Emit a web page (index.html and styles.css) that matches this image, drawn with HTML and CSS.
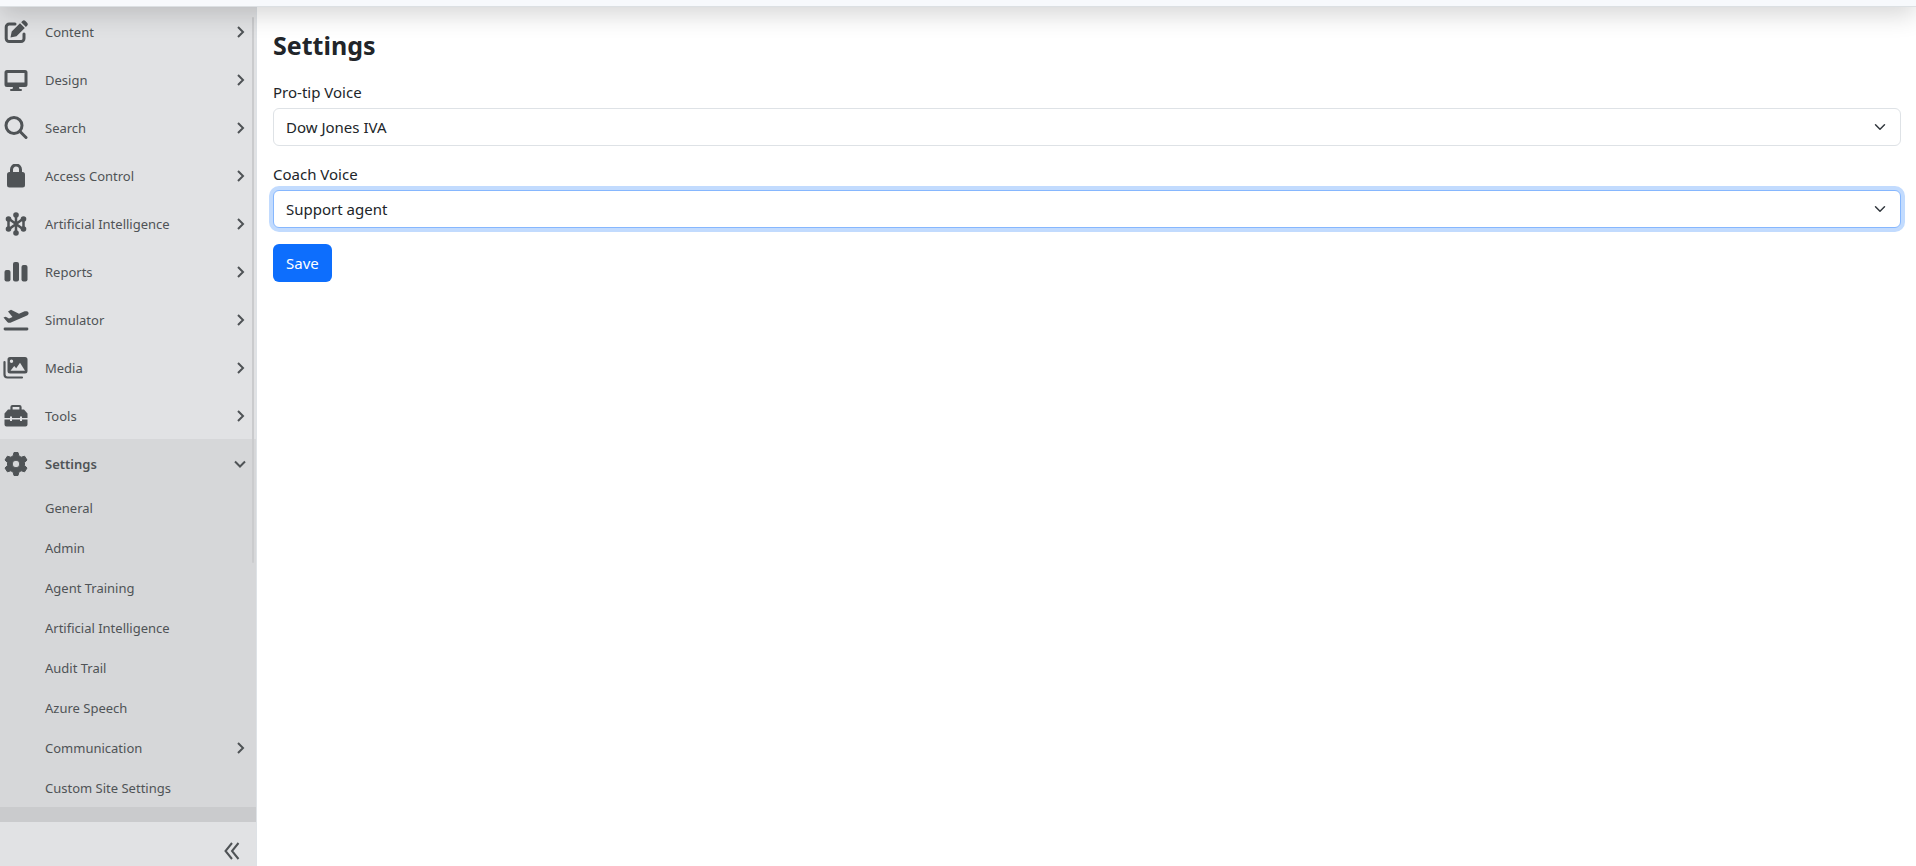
FILE: index.html
```html
<!DOCTYPE html>
<html lang="en">
<head>
<meta charset="utf-8">
<title>Settings</title>
<link rel="stylesheet" href="styles.css">
</head>
<body>
<svg class="sprite" aria-hidden="true">
  <symbol id="chevron" viewBox="0 0 16 16"><path d="M6 3l5 5-5 5" fill="none" stroke="currentColor" stroke-width="2"/></symbol>
  <symbol id="chevron-down" viewBox="0 0 16 16"><path d="M3 5.500l5 5 5-5" fill="none" stroke="currentColor" stroke-width="2"/></symbol>
</svg>
<header class="topbar"></header>
<div class="layout">
  <aside class="sidebar">
    <nav class="menu" aria-label="Main">
      <a class="item" href="#"><svg class="icon" viewBox="0 0 24 24"><path d="M11 4H5.500A3 3 0 0 0 2.200 7v11.500a3 3 0 0 0 3 3H17a3 3 0 0 0 3-3v-4.500" fill="none" stroke="currentColor" stroke-width="3" stroke-linecap="round"/><path d="M6.500 17.500l1.200-6 8.300-8.300 4.800 4.800-8.300 8.300zM17.200 2.200l1.200-1.200a2.200 2.200 0 0 1 3 0l1.700 1.700a2.200 2.200 0 0 1 0 3L21.900 6.900z"/></svg><span class="label">Content</span><svg class="arrow"><use href="#chevron"/></svg></a>
      <a class="item" href="#"><svg class="icon" viewBox="0 0 24 24"><path fill-rule="evenodd" d="M3 2h18a2.500 2.500 0 0 1 2.500 2.500v12A2.500 2.500 0 0 1 21 19h-6l.5 2H17a1 1 0 0 1 0 2H7a1 1 0 0 1 0-2h1.500l.5-2H3a2.500 2.500 0 0 1-2.500-2.500v-12A2.500 2.500 0 0 1 3 2zm.5 3v9.500h17V5z"/></svg><span class="label">Design</span><svg class="arrow"><use href="#chevron"/></svg></a>
      <a class="item" href="#"><svg class="icon" viewBox="0 0 24 24"><circle cx="10" cy="9.500" r="8" fill="none" stroke="currentColor" stroke-width="3"/><path d="M16 15.500l6 6" fill="none" stroke="currentColor" stroke-width="3" stroke-linecap="round"/></svg><span class="label">Search</span><svg class="arrow"><use href="#chevron"/></svg></a>
      <a class="item" href="#"><svg class="icon" viewBox="0 0 24 24"><path d="M7.500 9.500V5.500a4.500 4.500 0 0 1 9 0V9.500" fill="none" stroke="currentColor" stroke-width="3"/><rect x="3" y="8" width="18" height="15.500" rx="2.500"/></svg><span class="label">Access Control</span><svg class="arrow"><use href="#chevron"/></svg></a>
      <a class="item" href="#"><svg class="icon" viewBox="0 0 24 24"><path d="M12 3v18M4.500 6.500v11M19.500 6.500v11M4.500 6.500l15 11M4.500 17.500l15-11" fill="none" stroke="currentColor" stroke-width="2.500"/><circle cx="12" cy="3" r="2.800"/><circle cx="12" cy="21" r="2.800"/><circle cx="4.500" cy="7" r="2.800"/><circle cx="4.500" cy="17" r="2.800"/><circle cx="19.500" cy="7" r="2.800"/><circle cx="19.500" cy="17" r="2.800"/></svg><span class="label">Artificial Intelligence</span><svg class="arrow"><use href="#chevron"/></svg></a>
      <a class="item" href="#"><svg class="icon" viewBox="0 0 24 24"><rect x="0.500" y="10" width="6" height="11.500" rx="2"/><rect x="9" y="2" width="6" height="19.500" rx="2"/><rect x="17.500" y="5" width="6" height="16.500" rx="2"/></svg><span class="label">Reports</span><svg class="arrow"><use href="#chevron"/></svg></a>
      <a class="item" href="#"><svg class="icon wide" viewBox="0 0 26 24"><path d="M2 21h22" stroke="currentColor" stroke-width="2.800" stroke-linecap="round"/><path d="M.5 9.500l2.200-.8 3.300 1.800 3.500-1.500L5 3.500 8 1.800l8 4 4.500-2c2-.8 4.500-.6 5 .9.400 1.300-.5 2.300-2 3L8.500 14.300c-1.500.7-3 .9-4.200-.3z"/></svg><span class="label">Simulator</span><svg class="arrow"><use href="#chevron"/></svg></a>
      <a class="item" href="#"><svg class="icon wide" viewBox="0 0 26 24"><path d="M1.500 6v12.500a3 3 0 0 0 3 3H19" fill="none" stroke="currentColor" stroke-width="2.200" stroke-linecap="round"/><path fill-rule="evenodd" d="M7 1h15a2.500 2.500 0 0 1 2.500 2.500v11.500A2.500 2.500 0 0 1 22 17.500H7A2.500 2.500 0 0 1 4.500 15V3.500A2.500 2.500 0 0 1 7 1zM8.500 3.500a1.700 1.700 0 1 0 0 3.400 1.700 1.700 0 0 0 0-3.400zM7.500 14.800h14.500l-5-8-3.800 5.500-2-2.300z"/></svg><span class="label">Media</span><svg class="arrow"><use href="#chevron"/></svg></a>
      <a class="item" href="#"><svg class="icon" viewBox="0 0 24 24"><path d="M7.500 6V3a1 1 0 0 1 1-1h7a1 1 0 0 1 1 1V6" fill="none" stroke="currentColor" stroke-width="2.200"/><path d="M4 5.500h16l3.500 4V14H18v-1.500h-2V14H8v-1.500H6V14H.5V9.500zM.5 15.500H6V17h2v-1.500h8V17h2v-1.500h5.500v5a2 2 0 0 1-2 2h-19a2 2 0 0 1-2-2z"/></svg><span class="label">Tools</span><svg class="arrow"><use href="#chevron"/></svg></a>
      <div class="group">
        <a class="item current" href="#"><svg class="icon" viewBox="0 0 24 24"><path fill-rule="evenodd" d="M10 .5h4l.9 3.400 2.300 1.300 3.400-1 2.400 3.800L20.500 10.600v2.800L23 16l-2.400 3.800-3.400-1-2.300 1.300-.9 3.400h-4l-.9-3.400-2.300-1.300-3.400 1L1 16l2.500-2.600v-2.800L1 8l2.400-3.800 3.400 1 2.300-1.300zM12 8.200a3.800 3.800 0 1 0 0 7.600 3.800 3.800 0 0 0 0-7.600z" stroke="currentColor" stroke-linejoin="round"/></svg><span class="label">Settings</span><svg class="arrow"><use href="#chevron-down"/></svg></a>
        <a class="item sub" href="#"><span class="label">General</span></a>
        <a class="item sub" href="#"><span class="label">Admin</span></a>
        <a class="item sub" href="#"><span class="label">Agent Training</span></a>
        <a class="item sub" href="#"><span class="label">Artificial Intelligence</span></a>
        <a class="item sub" href="#"><span class="label">Audit Trail</span></a>
        <a class="item sub" href="#"><span class="label">Azure Speech</span></a>
        <a class="item sub" href="#"><span class="label">Communication</span><svg class="arrow"><use href="#chevron"/></svg></a>
        <a class="item sub" href="#"><span class="label">Custom Site Settings</span></a>
        <div class="more"></div>
      </div>
      <div class="scrollbar"></div>
    </nav>
    <div class="foot">
      <button class="collapse" type="button" aria-label="Collapse menu"><svg class="double" viewBox="0 0 18 18"><path d="M9 1L2.500 9 9 17M15.500 1L9 9l6.500 8" fill="none" stroke="currentColor" stroke-width="2"/></svg></button>
    </div>
  </aside>
  <main class="content">
    <h1 class="title">Settings</h1>
    <form class="form">
      <div class="field">
        <label for="tip">Pro-tip Voice</label>
        <select class="select" id="tip"><option>Dow Jones IVA</option></select>
      </div>
      <div class="field">
        <label for="coach">Coach Voice</label>
        <select class="select focused" id="coach"><option>Support agent</option></select>
      </div>
      <button class="save" type="button">Save</button>
    </form>
  </main>
</div>
</body>
</html>
```
FILE: styles.css
```css
* { box-sizing: border-box; }
body {
  margin: 0;
  height: 100vh;
  display: flex;
  flex-direction: column;
  overflow: hidden;
  background: #fff;
  color: #212529;
  font-family: "Segoe UI", "Noto Sans", "Open Sans", sans-serif;
  font-size: 15px;
  line-height: 24px;
}
.sprite { display: none; }
/* Header is scrolled mostly out of view; its lower edge and shadow remain */
.topbar {
  flex: none;
  height: 47px;
  margin-top: -40px;
  background: #f7f9fc;
  border-bottom: 1px solid #dce0e3;
  box-shadow: 0 8px 24px rgba(0, 0, 0, 0.16);
  position: relative;
  z-index: 1;
}
.layout { flex: 1; min-height: 0; display: flex; }
.sidebar {
  flex: none;
  width: 257px;
  display: flex;
  flex-direction: column;
  background: #e1e2e4;
  border-right: 1px solid #dee2e6;
  color: #4f5356;
  font-size: 13px;
}
.menu { flex: 1; min-height: 0; overflow: hidden; position: relative; }
.item {
  display: flex;
  align-items: center;
  height: 48px;
  padding: 1px 8px 0 4px;
  color: inherit;
  text-decoration: none;
}
.icon { flex: none; width: 24px; height: 24px; margin-right: 17px; fill: currentColor; }
.icon.wide { width: 26px; margin-left: -1px; margin-right: 16px; }
.label { flex: 1; }
.arrow { flex: none; width: 16px; height: 16px; }
.group { background: #d6d7d9; }
.current { font-weight: 600; }
.item.sub { height: 40px; padding-top: 2px; padding-left: 45px; }
.more { height: 40px; background: #cacbcd; }
.scrollbar {
  position: absolute;
  top: 10px;
  right: 2px;
  width: 2px;
  height: 67%;
  border-radius: 1px;
  background: #cacbcd;
}
.foot {
  flex: none;
  height: 44px;
  padding: 20px 15px 0 0;
  display: flex;
  justify-content: flex-end;
  align-items: flex-start;
}
.collapse { padding: 0; border: 0; background: none; color: #4f5356; line-height: 0; }
.double { width: 18px; height: 18px; }
.content { flex: 1; padding: 21px 15px 21px 16px; }
.title { margin: 0 0 18px; font-size: 25px; line-height: 34px; font-weight: 700; }
.field { margin-bottom: 16px; }
.field label { display: block; margin-bottom: 4px; }
.select {
  display: block;
  width: 100%;
  height: 38px;
  padding: 0 36px 0 12px;
  border: 1px solid #dee2e6;
  border-radius: 6px;
  appearance: none;
  color: inherit;
  font: inherit;
  background: #fff url("data:image/svg+xml,%3Csvg xmlns='http://www.w3.org/2000/svg' viewBox='0 0 16 16'%3E%3Cpath fill='none' stroke='%23343a40' stroke-linecap='round' stroke-linejoin='round' stroke-width='2' d='m2 5 6 6 6-6'/%3E%3C/svg%3E") no-repeat right 14px center / 12px 12px;
}
.select.focused { border-color: #86b7fe; box-shadow: 0 0 0 4px #c2dbfe; }
.save {
  display: block;
  height: 38px;
  padding: 0 13px;
  border: 0;
  border-radius: 6px;
  background: #0d6efd;
  color: #fff;
  font: inherit;
}
```
